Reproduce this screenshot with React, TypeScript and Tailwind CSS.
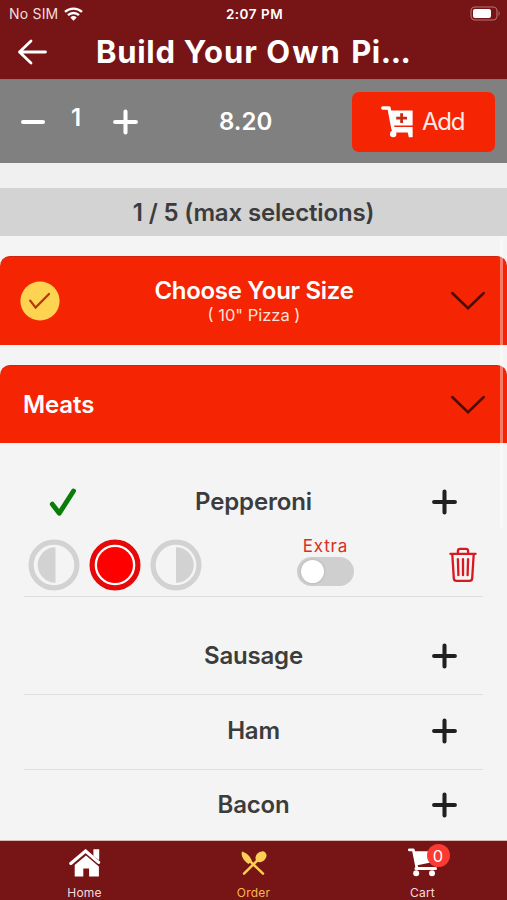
import React from 'react';

const Wifi = () => (
  <svg className="ml-[6px] h-[14px] w-[19px]" viewBox="0 0 19 14" fill="none" stroke="#fff" strokeWidth="2.3">
    <path d="M1 4.9a12.4 12.4 0 0 1 17 0M4 8.2a8 8 0 0 1 11 0" />
    <path d="M6.3 10.4a4.8 4.8 0 0 1 6.4 0L9.5 13.7z" fill="#fff" stroke="none" />
  </svg>
);

const Plus = ({ className }: { className: string }) => (
  <svg className={className} viewBox="0 0 24 24" fill="none" stroke="currentColor" strokeWidth="3.9" strokeLinecap="round">
    <path d="M2 12h20M12 2v20" />
  </svg>
);

const Chevron = () => (
  <svg className="h-[20px] w-[36px]" viewBox="0 0 36 20" fill="none" stroke="#4a0d08" strokeWidth="2.5" strokeLinecap="round">
    <path d="M2.2 2 18 17.2 33.8 2" />
  </svg>
);

const MedCart = () => (
  <svg className="h-[32px] w-[32px]" viewBox="0 0 32 32">
    <path d="M1.8 2h6.2l4 20.6" fill="none" stroke="#fff" strokeWidth="3.4" strokeLinejoin="round" strokeLinecap="round" />
    <path d="M8.4 4.4H31.6v15H11.2z" fill="#fff" />
    <path d="M11.5 21H31.6v5.6H10.5z" fill="#fff" />
    <circle cx="12.2" cy="28" r="3.2" fill="#fff" />
    <path d="M26.6 26h5v5.2h-3.8z" fill="#fff" />
    <path d="M15.2 12.2h10.8M20.6 7.2v9.8" stroke="#c72a12" strokeWidth="2.8" />
  </svg>
);

const Portion = ({ side }: { side: 'left' | 'all' | 'right' }) => {
  const active = side === 'all';
  return (
    <svg className="h-[52px] w-[52px]" viewBox="0 0 52 52">
      <circle cx="26" cy="26" r="22.9" fill={active ? '#fff' : 'none'} stroke={active ? '#e60909' : '#d2d2d2'} strokeWidth="5.2" />
      {side === 'left' && <path d="M27.5 8.2a17.8 17.8 0 0 0 0 35.6z" fill="#d2d2d2" />}
      {active && <circle cx="26" cy="26" r="18" fill="#ff0000" />}
      {side === 'right' && <path d="M26 8.2a17.8 17.8 0 0 1 0 35.6z" fill="#d2d2d2" />}
    </svg>
  );
};

const Trash = () => (
  <svg className="h-[36px] w-[28px]" viewBox="0 0 28 36" fill="none" stroke="#d71920" strokeWidth="2.3" strokeLinecap="round" strokeLinejoin="round">
    <path d="M1.4 6.8h25.2M8.9 6.5V4q0-2.2 2.2-2.2h5.8q2.2 0 2.2 2.2v2.5M3.3 7.2l1.5 24.2q.2 2.5 2.7 2.5h13q2.5 0 2.7-2.5l1.5-24.2M8.9 12.2l.5 16M14 12.2v16M19.1 12.2l-.5 16" />
  </svg>
);

const HomeIcon = () => (
  <svg className="h-[28px] w-[32px]" viewBox="0 0 32 28">
    <path d="M1.8 14.4 16.6 2l13 11.4" fill="none" stroke="#fff" strokeWidth="3.2" strokeLinecap="round" />
    <path d="M24.4.3h5.8v11L24.4 7z" fill="#fff" />
    <path d="M17 6.4 29.9 17.4v10.1h-9.8v-8h-5.8v8H5.7V16z" fill="#fff" />
  </svg>
);

const Utensils = () => (
  <svg className="h-[24px] w-[26px]" viewBox="0 0 26 24">
    <path d="M1 .6C-.4 4.4 2.4 9.6 7.6 13l3.2-3C9.6 5.8 6 2.2 1 .6z" fill="#fdce55" />
    <path d="M9 10.2 22 22.6M3 22.6 17.5 8.3" stroke="#fdce55" strokeWidth="2.5" strokeLinecap="round" />
    <ellipse cx="20" cy="5.8" rx="4.8" ry="6.1" transform="rotate(47 20 5.8)" fill="#fdce55" />
  </svg>
);

const CartIcon = () => (
  <svg className="h-[29px] w-[30px]" viewBox="0 0 30 29">
    <path d="M1.3 1.8h4L9 20.5" fill="none" stroke="#fff" strokeWidth="2.7" strokeLinecap="round" strokeLinejoin="round" />
    <path d="M5.3 3.2H29v10L9.4 17.2z" fill="#fff" />
    <path d="M8 20.4h19.5" stroke="#fff" strokeWidth="3" strokeLinecap="round" />
    <circle cx="8.2" cy="25.2" r="3" fill="#fff" />
    <circle cx="24" cy="25.2" r="3" fill="#fff" />
  </svg>
);

const Topping = ({ name, className }: { name: string; className: string }) => (
  <div className={`mx-[24px] grid grid-cols-[1fr_auto_1fr] items-center ${className}`}>
    <span />
    <span className="text-[24px] font-semibold leading-[30px] tracking-[-0.2px] text-[#3c3c3c]">{name}</span>
    <Plus className="mr-[26px] h-[26px] w-[25px] justify-self-end text-[#202020]" />
  </div>
);

export default function App() {
  return (
    <div className="relative flex h-[900px] w-[507px] flex-col overflow-hidden bg-[#f4f4f4] font-['Inter',sans-serif]">
      <header className="h-[79px] shrink-0 bg-[#771416] text-white">
        <div className="grid h-[27px] grid-cols-3 items-center pl-[9px] pr-[6px] text-[14px] leading-[18px]">
          <div className="flex items-center text-[#f1dfdf]">
            <span className="tracking-[0.2px]">No SIM</span>
            <Wifi />
          </div>
          <span className="-ml-[1px] text-center text-[13.5px] font-semibold tracking-[0.5px]">2:07 PM</span>
          <svg className="h-[15px] w-[31px] justify-self-end" viewBox="0 0 31 15">
            <rect x="1" y="1" width="26" height="13" rx="4" fill="none" stroke="#b77478" strokeWidth="1.1" />
            <rect x="3" y="3" width="18" height="9" rx="2" fill="#fff" />
            <path d="M28.6 5v5q2.2-2.5 0-5" fill="#b77478" />
          </svg>
        </div>
        <div className="flex h-[50px] items-center">
          <svg className="ml-[17px] h-[28px] w-[31px]" viewBox="0 0 31 28" fill="none" stroke="#fff" strokeWidth="2.8" strokeLinecap="round" strokeLinejoin="round">
            <path d="M14 3 2.5 14 14 25M2.5 14h26" />
          </svg>
          <h1 className="ml-[48px] whitespace-nowrap text-[31px] font-bold leading-[40px]">
            <span className="tracking-[0.7px]">Build </span>
            <span className="tracking-[1px]">Your </span>
            <span className="tracking-[2px]">Own </span>
            <span className="tracking-[0.6px]">Pi</span>
            <span className="tracking-[-0.5px]">...</span>
          </h1>
        </div>
      </header>

      <div className="flex h-[84px] shrink-0 items-center border-t border-[#a06b6b] bg-[#808080] text-white">
        <span className="ml-[21px] h-[4px] w-[24px] rounded-full bg-white" />
        <span className="ml-[25px] w-[12px] pb-[8px] text-center text-[24px] font-semibold leading-[30px]">1</span>
        <Plus className="ml-[31px] h-[26px] w-[25px]" />
        <span className="ml-[81px] w-[54px] whitespace-nowrap text-[24px] font-semibold leading-[30px]">8.20</span>
        <button className="ml-[79px] flex h-[60px] w-[143px] items-center rounded-[7px] bg-[#f52403] pl-[29px]">
          <MedCart />
          <span className="ml-[9px] text-[24px] font-normal leading-[30px] tracking-[-1.2px] text-[#ffeae6]">Add</span>
        </button>
      </div>

      <div className="h-[25px] shrink-0 bg-[#f0f0f0]" />
      <div className="flex h-[48px] shrink-0 items-center justify-center bg-[#d3d3d3] pt-[2px]">
        <span className="text-[24px] font-semibold leading-[30px] tracking-[-0.15px] text-[#3c3c3c]">1 / 5 (max selections)</span>
      </div>

      <section className="mt-[20px] grid h-[89px] shrink-0 grid-cols-[1fr_auto_1fr] items-center rounded-t-[10px] border-t border-[#cf2410] bg-[#f52403] pl-[20px] pr-[21px] text-white">
        <svg className="h-[40px] w-[40px]" viewBox="0 0 40 40">
          <circle cx="20" cy="20" r="19.6" fill="#fdd351" />
          <path d="m10.2 19.6 5.4 7L29 13" fill="none" stroke="#b5380b" strokeWidth="2.3" strokeLinecap="round" />
        </svg>
        <div className="flex flex-col items-center pl-[2px]">
          <span className="text-[24px] font-semibold leading-[28px] tracking-[-0.3px]">Choose Your Size</span>
          <span className="text-[16.5px] font-normal leading-[21px] text-[#ffe0da]">( 10" Pizza )</span>
        </div>
        <div className="justify-self-end"><Chevron /></div>
      </section>

      <section className="mt-[20px] flex h-[78px] shrink-0 items-center justify-between rounded-t-[10px] border-t border-[#cf2410] bg-[#f52403] pl-[23px] pr-[21px] text-white">
        <span className="text-[24px] font-semibold leading-[30px] tracking-[-0.1px]">Meats</span>
        <Chevron />
      </section>

      <div className="mx-[24px] mt-[36px] h-[118px] shrink-0 border-b border-[#dedede]">
        <div className="grid h-[46px] grid-cols-[1fr_auto_1fr] items-center">
          <svg className="ml-[25px] h-[28px] w-[28px]" viewBox="0 0 28 28" fill="none" stroke="#087d08" strokeWidth="4.9" strokeLinecap="round" strokeLinejoin="round">
            <path d="m3.3 16.2 7 9L24.5 3" />
          </svg>
          <span className="text-[24px] font-semibold leading-[30px] tracking-[-0.15px] text-[#3c3c3c]">Pepperoni</span>
          <Plus className="mr-[26px] h-[26px] w-[25px] justify-self-end text-[#202020]" />
        </div>
        <div className="flex h-[70px] items-center pl-[4px]">
          <div className="flex gap-[9px] pt-[10px]">
            <Portion side="left" />
            <Portion side="all" />
            <Portion side="right" />
          </div>
          <div className="ml-[95px] flex w-[57px] flex-col items-center">
            <span className="text-[17px] leading-[22px] tracking-[0.8px] text-[#d4301f]">Extra</span>
            <div className="flex h-[29px] w-[57px] items-center rounded-full bg-[#cfcfcf] pl-[4px]">
              <span className="h-[23px] w-[23px] rounded-full bg-white shadow-[0_0_3px_#aaa]" />
            </div>
          </div>
          <div className="ml-[95px] pt-[9px]"><Trash /></div>
        </div>
      </div>

      <Topping name="Sausage" className="h-[98px] shrink-0 border-b border-[#dedede] pt-[20px]" />
      <Topping name="Ham" className="h-[75px] shrink-0 border-b border-[#dedede] pb-[2px]" />
      <Topping name="Bacon" className="h-[70px] shrink-0" />

      <nav className="grid h-[60px] shrink-0 grid-cols-3 border-t border-[#d8b8b8] bg-[#771416] text-[12px] leading-[16px] text-[#f1dfdf]">
        <div className="flex flex-col items-center">
          <div className="flex h-[44px] items-center"><HomeIcon /></div>
          <span className="tracking-[0.2px]">Home</span>
        </div>
        <div className="flex flex-col items-center text-[#fdb64b]">
          <div className="flex h-[44px] items-center"><Utensils /></div>
          <span className="tracking-[0.2px]">Order</span>
        </div>
        <div className="flex flex-col items-center">
          <div className="relative flex h-[44px] items-center pb-[1px]">
            <CartIcon />
            <span className="absolute left-[19px] top-[3px] flex h-[23px] w-[23px] items-center justify-center rounded-full bg-[#fb3a31] text-[16.5px] text-white">0</span>
          </div>
          <span className="tracking-[0.2px]">Cart</span>
        </div>
      </nav>

      <div className="absolute left-[500px] top-[238px] h-[290px] w-[3px] rounded-full bg-white/40" />
    </div>
  );
}
